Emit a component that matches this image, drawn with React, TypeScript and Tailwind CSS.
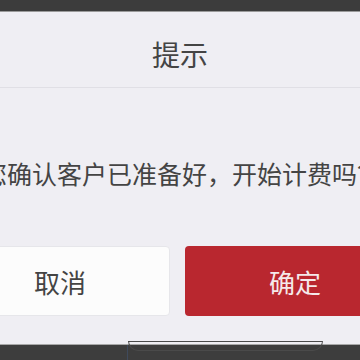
import React from 'react';

// Confirm dialog: "提示" with cancel / confirm buttons, over a dark page
export default function App() {
    const font = { fontFamily: '"Noto Sans CJK SC", "Noto Sans", sans-serif' };
    return (
        <div className="w-[360px] h-[360px] overflow-hidden bg-[#3d3d3d] flex flex-col" style={font}>
            {/* Top strip */}
            <div className="h-[12px] shrink-0 bg-[#3c3c3c] border-b border-[#9a9a9a]" />

            {/* Dialog */}
            <div className="w-[460px] ml-[-50px] h-[332px] shrink-0 bg-[#efeef3] flex flex-col">
                <div className="h-[76px] shrink-0 flex items-center justify-center border-b border-[#e0dfe5]">
                    <span className="text-[28px] leading-none text-[#444] pt-[8px]">提示</span>
                </div>
                <div className="h-[158px] shrink-0 flex justify-center pt-[70px] pl-[4px]">
                    <span className="text-[25px] leading-[30px] whitespace-nowrap text-[#444]">
                        您确认客户已准备好，开始计费吗？
                    </span>
                </div>
                <div className="flex gap-[15px]">
                    <button className="w-[220px] h-[70px] rounded-[4px] bg-[#fcfcfc] border border-[#e6e6ea] text-[26px] text-[#444]">
                        取消
                    </button>
                    <button className="w-[220px] h-[70px] rounded-[4px] bg-[#b9272f] text-[26px] text-[#f5e9ea]">
                        确定
                    </button>
                </div>
            </div>

            {/* Page behind the dialog */}
            <div className="flex-1 border-t border-[#a8a8a8] flex">
                <div className="w-[128px] shrink-0 border-r border-[#3f4a5c]" />
                <div className="w-[195px] h-[10px] mt-[-4px] rounded-b-[12px] border border-[#4a4a4a]" />
            </div>
        </div>
    );
}
